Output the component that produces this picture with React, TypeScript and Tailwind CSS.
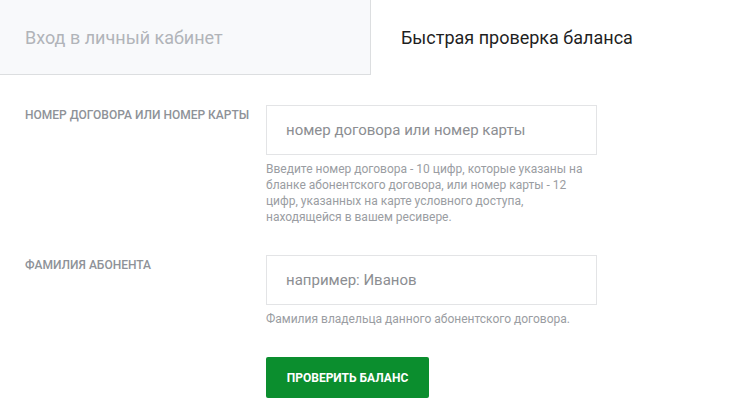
export default function App() {
  return (
    <div className="min-h-[404px] w-[738px] bg-white font-['Roboto',sans-serif]">
      <div className="flex h-[75px]">
        <div className="flex w-[371px] items-center border-r border-b border-[#dcdee0] bg-[#f8f9fb] pl-[25px] text-[18px] text-[#b1b4b9]">
          Вход в личный кабинет
        </div>
        <div className="flex flex-1 items-center pl-[30px] text-[18px] text-[#1f1f1f]">
          Быстрая проверка баланса
        </div>
      </div>

      <div className="flex flex-col pt-[30px] pl-[25px]">
        <Field
          label="НОМЕР ДОГОВОРА ИЛИ НОМЕР КАРТЫ"
          placeholder="номер договора или номер карты"
          help="Введите номер договора - 10 цифр, которые указаны на бланке абонентского договора, или номер карты - 12 цифр, указанных на карте условного доступа, находящейся в вашем ресивере."
        />
        <div className="h-[30px]" />
        <Field
          label="ФАМИЛИЯ АБОНЕНТА"
          placeholder="например: Иванов"
          help="Фамилия владельца данного абонентского договора."
        />
        <div className="ml-[241px] mt-[30px]">
          <button className="h-[41px] w-[163px] rounded-[2px] bg-[#0b8e2e] text-[12px] font-bold text-white">
            ПРОВЕРИТЬ БАЛАНС
          </button>
        </div>
      </div>
    </div>
  )
}

function Field({ label, placeholder, help }: { label: string; placeholder: string; help: string }) {
  return (
    <div className="flex">
      <div className="w-[241px] pt-[2px] text-[12px] font-medium leading-[16px] text-[#8e9298]">
        {label}
      </div>
      <div className="w-[331px]">
        <input
          placeholder={placeholder}
          className="h-[50px] w-full border border-[#e3e4e6] bg-white px-[19px] text-[15px] outline-none placeholder:text-[#8c8e92]"
        />
        <div className="mt-[6px] pr-[8px] text-[12px] leading-[16px] text-[#9a9da2]">{help}</div>
      </div>
    </div>
  )
}
